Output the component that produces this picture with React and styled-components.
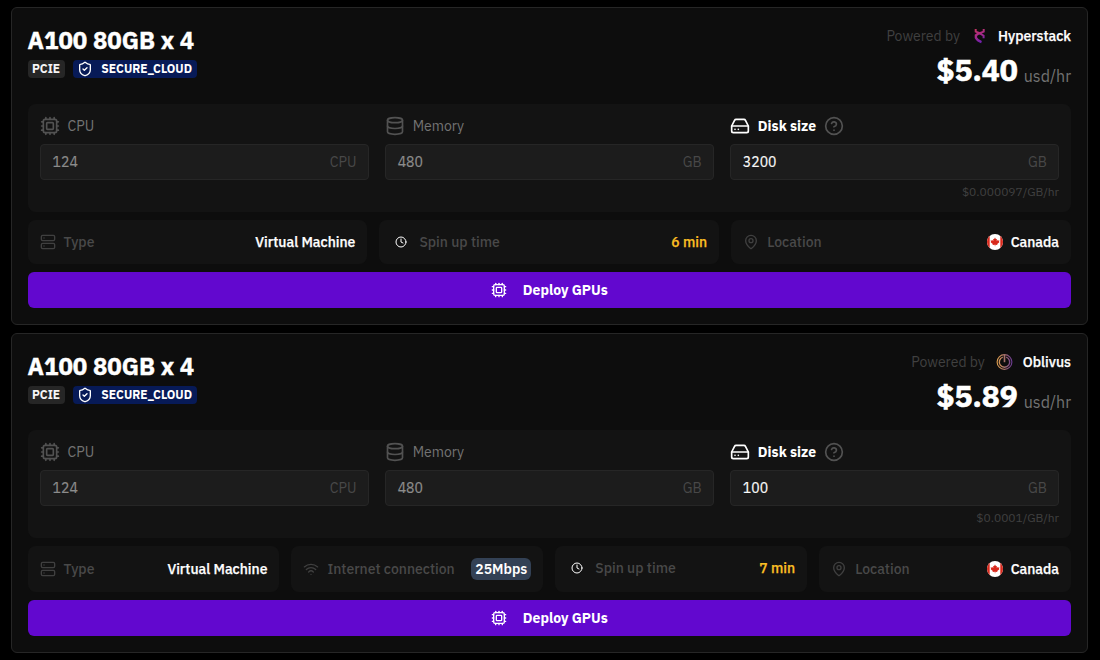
import React from "react";
import styled, { createGlobalStyle } from "styled-components";
import {
  CircleHelp,
  Clock,
  Cpu,
  Database,
  HardDrive,
  MapPin,
  Server,
  ShieldCheck,
  Wifi,
} from "lucide-react";

const GlobalStyle = createGlobalStyle`
  * { box-sizing: border-box; }
  body {
    margin: 0;
    background: #000;
    color: #fff;
    font: 400 14px/20px "IBM Plex Sans", Roboto, "Liberation Sans", sans-serif;
  }
  svg { display: block; flex: none; }
`;

const Page = styled.main`
  display: flex;
  flex-direction: column;
  gap: 8px;
  height: 660px;
  overflow: hidden;
  padding: 7px 12px 0 10.6px;
`;

const Card = styled.section`
  display: flex;
  flex-direction: column;
  gap: 8px;
  padding: 16px;
  border: 1px solid #262626;
  border-radius: 6px;
  background: #0d0d0d;
`;

const Header = styled.header`
  display: flex;
  justify-content: space-between;
  height: 72px;
`;

const Title = styled.h2`
  height: 32px;
  margin: 0 0 4px;
  font-size: 24px;
  line-height: 33px;
  font-weight: 700;
  -webkit-text-stroke: 0.4px;
`;

const Badges = styled.div`
  display: flex;
  gap: 8px;
`;

const Badge = styled.span`
  display: flex;
  align-items: center;
  gap: 8px;
  height: 18px;
  padding: 0 4.8px 0 4.4px;
  border-radius: 4px;
  background: ${(p) => (p.$secure ? "#071a57" : "#262626")};
  color: ${(p) => (p.$secure ? "#fff" : "#f5f5f5")};
  font-size: 12px;
  font-weight: 700;
`;

const Offer = styled.div`
  display: flex;
  flex-direction: column;
  align-items: flex-end;
`;

const Provider = styled.div`
  display: flex;
  align-items: center;
  height: 26px;
  padding-top: 2px;
  color: #404040;

  svg { margin: 0 9.500px 0 11.500px; }
  strong { color: #fff; font-weight: 500; -webkit-text-stroke: 0.25px; }
`;

const Price = styled.div`
  display: flex;
  align-items: baseline;
  gap: 6px;
  font-size: 30px;
  line-height: 47px;
  font-weight: 700;
  -webkit-text-stroke: 0.6px;

  small {
    color: #737373;
    font-size: 16px;
    font-weight: 400;
    -webkit-text-stroke: 0;
    position: relative;
    top: 1px;
  }
`;

const Resources = styled.div`
  display: grid;
  grid-template-columns: repeat(3, 1fr);
  gap: 16px;
  height: 108px;
  padding: 12px;
  border-radius: 8px;
  background: #131313;
`;

const Field = styled.div`
  display: flex;
  flex-direction: column;
`;

const FieldLabel = styled.div`
  display: flex;
  align-items: center;
  gap: 8px;
  height: 20px;
  margin-bottom: 8px;
  color: ${(p) => (p.$active ? "#fff" : "#737373")};
  font-weight: ${(p) => (p.$active ? 700 : 400)};

  svg { color: ${(p) => (p.$active ? "#fff" : "#525252")}; }
  svg + span + svg { color: #525252; }
`;

const Input = styled.div`
  display: flex;
  align-items: center;
  justify-content: space-between;
  height: 36px;
  padding: 0 11.2px 0 12px;
  border: 1px solid #262626;
  border-radius: 4px;
  background: #1c1c1c;
  color: ${(p) => (p.$active ? "#fafafa" : "#8c8c8c")};
  -webkit-text-stroke: 0.2px;
`;

const Unit = styled.span`
  color: #484848;
  -webkit-text-stroke: 0;
`;

const Hint = styled.div`
  margin-top: 4px;
  color: #404040;
  font-size: 12px;
  line-height: 16px;
  text-align: right;
`;

const Specs = styled.div`
  display: grid;
  grid-auto-flow: column;
  grid-auto-columns: minmax(0, 1fr);
  gap: 12px;
`;

const Spec = styled.div`
  display: flex;
  justify-content: space-between;
  align-items: ${(p) => (p.$clock ? "flex-start" : "center")};
  padding: 12px 12px 12px ${(p) => (p.$clock ? 16 : 12)}px;
  border-radius: 8px;
  background: #131313;
  font-weight: 500;
`;

const SpecLabel = styled.div`
  display: flex;
  align-items: center;
  gap: ${(p) => (p.$clock ? 12 : 8)}px;
  color: #494949;

  svg { color: ${(p) => (p.$clock ? "#fff" : "#404040")}; }
`;

const SpecValue = styled.div`
  display: flex;
  align-items: center;
  gap: 7.500px;
  color: ${(p) => (p.$amber ? "#fbbf24" : "#fff")};
  -webkit-text-stroke: 0.25px;
`;

const Speed = styled.span`
  height: 22px;
  padding: 0 4px;
  border-radius: 6px;
  background: #334155;
  font-weight: 600;
  line-height: 22px;
`;

const DeployButton = styled.button`
  display: flex;
  align-items: center;
  justify-content: center;
  gap: 16px;
  height: 36px;
  padding: 0;
  border: 0;
  border-radius: 6px;
  background: #6208cf;
  color: #fff;
  font: inherit;
  font-weight: 700;
`;

function HyperstackLogo() {
  return (
    <svg width="17" height="16" viewBox="0 0 17 16" fill="none">
      <defs>
        <linearGradient id="hyper" x1="4" y1="1" x2="10" y2="15" gradientUnits="userSpaceOnUse">
          <stop stopColor="#c63560" />
          <stop offset="0.45" stopColor="#a82a86" />
          <stop offset="1" stopColor="#6a1fb4" />
        </linearGradient>
      </defs>
      <g stroke="url(#hyper)" strokeWidth="2">
        <path d="M4.700 1v2.600l4 1.600 4-1.600V1" />
        <path d="M9.500 5.200H7.800L4.900 7.400v2.400c1 2 2.800 3.400 5.600 4.400" strokeWidth="2.400" />
        <path d="M9 5.400l3.600 2.300v2.500" />
      </g>
    </svg>
  );
}

function OblivusLogo() {
  return (
    <svg width="17" height="16" viewBox="0 0 17 16" fill="none">
      <defs>
        <linearGradient id="obliv" x1="1" y1="8" x2="16" y2="8" gradientUnits="userSpaceOnUse">
          <stop stopColor="#e0a04e" />
          <stop offset="0.5" stopColor="#a5706a" />
          <stop offset="1" stopColor="#6b3a94" />
        </linearGradient>
      </defs>
      <g stroke="url(#obliv)">
        <circle cx="8.500" cy="8" r="7.400" strokeWidth="1.100" />
        <path d="M6.800 3.100a5.200 5.200 0 1 0 3.400 0" strokeWidth="1.400" />
      </g>
      <rect x="7.700" y="1" width="1.600" height="7.200" fill="#a5706a" />
    </svg>
  );
}

function CanadaFlag() {
  return (
    <svg width="16" height="16" viewBox="0 0 16 16">
      <clipPath id="flag">
        <circle cx="8" cy="8" r="8" />
      </clipPath>
      <g clipPath="url(#flag)">
        <rect width="16" height="16" fill="#fff" />
        <path
          fill="#d9291c"
          d="M0 0h2.700v16H0zM13.300 0H16v16h-2.700zM8 3.600l1 1.700 1-.4-.3 2 1.200-1 .3.700 1.300-.2-.6 1.500.5.400-2.200 1.800.2.900-2.100-.3v1.600h-.5v-1.600l-2.200.3.2-.9-2.200-1.800.5-.4-.6-1.500 1.400.2.200-.7 1.300 1-.4-2 1 .4z"
        />
      </g>
    </svg>
  );
}

function ResourceField({ icon: Icon, label, value, unit, hint, active }) {
  return (
    <Field>
      <FieldLabel $active={active}>
        <Icon size={20} strokeWidth={2} />
        <span>{label}</span>
        {active && <CircleHelp size={20} strokeWidth={2} />}
      </FieldLabel>
      <Input $active={active}>
        <span>{value}</span>
        <Unit>{unit}</Unit>
      </Input>
      {hint && <Hint>{hint}</Hint>}
    </Field>
  );
}

function OfferCard({ logo, provider, price, disk, diskPrice, spinUp, speed }) {
  return (
    <Card>
      <Header>
        <div>
          <Title>A100 80GB x 4</Title>
          <Badges>
            <Badge>PCIE</Badge>
            <Badge $secure>
              <ShieldCheck size={16} strokeWidth={2} />
              SECURE_CLOUD
            </Badge>
          </Badges>
        </div>
        <Offer>
          <Provider>
            <span>Powered by</span>
            {logo}
            <strong>{provider}</strong>
          </Provider>
          <Price>
            {price}
            <small>usd/hr</small>
          </Price>
        </Offer>
      </Header>

      <Resources>
        <ResourceField icon={Cpu} label="CPU" value="124" unit="CPU" />
        <ResourceField icon={Database} label="Memory" value="480" unit="GB" />
        <ResourceField
          icon={HardDrive}
          label="Disk size"
          value={disk}
          unit="GB"
          hint={diskPrice}
          active
        />
      </Resources>

      <Specs>
        <Spec>
          <SpecLabel>
            <Server size={16} strokeWidth={2} />
            Type
          </SpecLabel>
          <SpecValue>Virtual Machine</SpecValue>
        </Spec>
        {speed && (
          <Spec>
            <SpecLabel>
              <Wifi size={16} strokeWidth={2} />
              Internet connection
            </SpecLabel>
            <Speed>{speed}</Speed>
          </Spec>
        )}
        <Spec $clock>
          <SpecLabel $clock>
            <Clock size={12} strokeWidth={2} />
            Spin up time
          </SpecLabel>
          <SpecValue $amber>{spinUp}</SpecValue>
        </Spec>
        <Spec>
          <SpecLabel>
            <MapPin size={16} strokeWidth={2} />
            Location
          </SpecLabel>
          <SpecValue>
            <CanadaFlag />
            Canada
          </SpecValue>
        </Spec>
      </Specs>

      <DeployButton>
        <Cpu size={16} strokeWidth={2} />
        Deploy GPUs
      </DeployButton>
    </Card>
  );
}

export default function App() {
  return (
    <>
      <GlobalStyle />
      <Page>
        <OfferCard
          logo={<HyperstackLogo />}
          provider="Hyperstack"
          price="$5.40"
          disk="3200"
          diskPrice="$0.000097/GB/hr"
          spinUp="6 min"
        />
        <OfferCard
          logo={<OblivusLogo />}
          provider="Oblivus"
          price="$5.89"
          disk="100"
          diskPrice="$0.0001/GB/hr"
          spinUp="7 min"
          speed="25Mbps"
        />
      </Page>
    </>
  );
}
